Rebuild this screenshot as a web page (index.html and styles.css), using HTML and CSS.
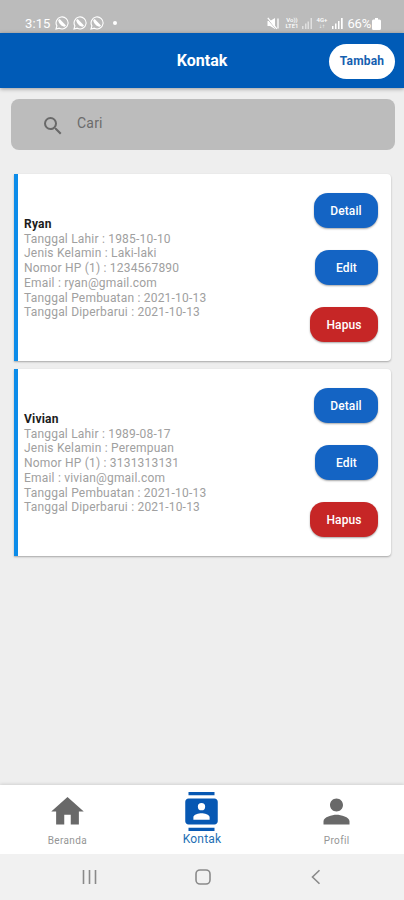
FILE: index.html
```
<!DOCTYPE html>
<html lang="id">
<head>
<meta charset="utf-8">
<title>Kontak</title>
<link rel="stylesheet" href="styles.css">
</head>
<body>
<svg class="defs" width="0" height="0">
  <symbol id="chat" viewBox="0 0 14 14">
    <path d="M1 13l.9-3.1A6 6 0 1 1 4.300 12.200z" fill="none" stroke="#fff" stroke-width="1.100"/>
    <path d="M3.200 4l1.500-1 6.300 6.500-1.400 1.200C6.500 10.500 3.600 7.500 3.200 4z" fill="#fff"/>
  </symbol>
</svg>
<div class="status">
  <span class="time">3:15</span>
  <svg class="chat"><use href="#chat"/></svg>
  <svg class="chat"><use href="#chat"/></svg>
  <svg class="chat"><use href="#chat"/></svg>
  <i class="dot"></i>
  <svg class="mute" width="13" height="13" viewBox="0 0 13 13"><path d="M.5 4h2.500L8 1v11L3 9H.5z" fill="#fff"/><path d="M0 1.500l9 10.500" stroke="#bbb" stroke-width="1"/><path d="M.8.8l9 11M11 1.500v10" stroke="#fff" stroke-width="1.300"/></svg>
  <span class="net volte">Vo))<br>LTE1</span>
  <svg class="bars faint" width="11" height="11" viewBox="0 0 11 11"><path d="M1 8h1.500v3H1zM4 5.500h1.500V11H4zM6.500 3.500H8V11H6.500zM9.500 0H11v11H9.500z" fill="#fff"/></svg>
  <span class="net lte">4G+<br>↓↑</span>
  <svg class="bars" width="11" height="11" viewBox="0 0 11 11"><path d="M0 8h1.500v3H0zM3 5.500h1.500V11H3zM6 3h1.500v8H6zM9 0h1.700v11H9z" fill="#fff"/></svg>
  <span class="percent">66%</span>
  <svg class="battery" width="9" height="12" viewBox="0 0 9 12"><path d="M3 0h3v1.500h1.500Q9 1.500 9 3v7.500Q9 12 7.500 12h-6Q0 12 0 10.500V3q0-1.500 1.500-1.500H3z" fill="#fff"/></svg>
</div>
<header class="header">
  <h1>Kontak</h1>
  <button class="add">Tambah</button>
</header>
<main class="main">
  <div class="search">
    <svg width="24" height="24" viewBox="0 0 24 24"><path fill="#696969" d="M15.500 14h-.79l-.28-.27A6.471 6.471 0 0 0 16 9.500 6.500 6.500 0 1 0 9.500 16c1.610 0 3.090-.59 4.230-1.570l.27.28v.79l5 4.990L20.490 19l-4.990-5zm-6 0C7.010 14 5 11.990 5 9.500S7.010 5 9.500 5 14 7.010 14 9.500 11.990 14 9.500 14z"/></svg>
    <span>Cari</span>
  </div>
  <section class="card">
    <div class="info">
      <h2>Ryan</h2>
      <p>Tanggal Lahir : 1985-10-10</p>
      <p>Jenis Kelamin : Laki-laki</p>
      <p>Nomor HP (1) : 1234567890</p>
      <p>Email : ryan@gmail.com</p>
      <p>Tanggal Pembuatan : 2021-10-13</p>
      <p>Tanggal Diperbarui : 2021-10-13</p>
    </div>
    <div class="actions">
      <button class="detail">Detail</button>
      <button class="edit">Edit</button>
      <button class="delete">Hapus</button>
    </div>
  </section>
  <section class="card">
    <div class="info">
      <h2>Vivian</h2>
      <p>Tanggal Lahir : 1989-08-17</p>
      <p>Jenis Kelamin : Perempuan</p>
      <p>Nomor HP (1) : 3131313131</p>
      <p>Email : vivian@gmail.com</p>
      <p>Tanggal Pembuatan : 2021-10-13</p>
      <p>Tanggal Diperbarui : 2021-10-13</p>
    </div>
    <div class="actions">
      <button class="detail">Detail</button>
      <button class="edit">Edit</button>
      <button class="delete">Hapus</button>
    </div>
  </section>
</main>
<nav class="tabs">
  <a class="tab"><svg viewBox="0 0 24 24"><path d="M10 20v-6h4v6h5v-8h3L12 3 2 12h3v8z"/></svg><span>Beranda</span></a>
  <a class="tab active"><svg viewBox="0 0 24 24"><path d="M20 0H4v2h16V0zM4 24h16v-2H4v2zM20 4H4c-1.100 0-2 .9-2 2v12c0 1.100.9 2 2 2h16c1.100 0 2-.9 2-2V6c0-1.100-.9-2-2-2zm-8 2.750a2.250 2.250 0 1 1 0 4.500 2.250 2.250 0 0 1 0-4.500zM17 17H7v-1.500c0-1.670 3.330-2.500 5-2.500s5 .83 5 2.500V17z"/></svg><span>Kontak</span></a>
  <a class="tab"><svg viewBox="0 0 24 24"><path d="M12 12c2.210 0 4-1.790 4-4s-1.790-4-4-4-4 1.790-4 4 1.790 4 4 4zm0 2c-2.670 0-8 1.340-8 4v2h16v-2c0-2.660-5.330-4-8-4z"/></svg><span>Profil</span></a>
</nav>
<footer class="system">
  <svg width="16" height="16" viewBox="0 0 16 16"><path d="M1.500 1v14M7.500 1v14M13.500 1v14"/></svg>
  <svg width="16" height="16" viewBox="0 0 16 16"><rect x="1" y="1" width="14" height="14" rx="4"/></svg>
  <svg width="16" height="16" viewBox="0 0 16 16"><path d="M11.500 1.200L4.500 8l7 6.800"/></svg>
</footer>
</body>
</html>
```

FILE: styles.css
```
* { box-sizing: border-box; }
body {
  margin: 0;
  width: 404px;
  height: 900px;
  display: flex;
  flex-direction: column;
  background: #eeeeee;
  font-family: Roboto, sans-serif;
  overflow: hidden;
}
h1, h2, p { margin: 0; }
button { border: 0; padding: 0; font-family: inherit; }
.defs { display: none; }

.status {
  flex: none;
  height: 33px;
  padding: 13px 23px 0 25px;
  display: flex;
  align-items: center;
  background: #bbbbbb;
  color: #fff;
}
.time { width: 30px; font-size: 13px; letter-spacing: 0.1px; }
.chat { width: 14px; height: 14px; margin-right: 3.500px; }
.dot { width: 4px; height: 4px; margin-left: 5px; border-radius: 50%; background: #fff; }
.mute { margin-left: auto; }
.net { font-size: 6px; line-height: 6px; font-weight: 500; text-align: center; }
.volte { width: 15px; margin-left: 4px; }
.lte { width: 13px; margin: 0 4px 0 3px; }
.faint { margin-left: 2px; opacity: 0.55; }
.percent { margin-left: 4px; font-size: 13px; letter-spacing: -0.2px; }
.battery { margin: 1px 0 0 1px; }

.header {
  flex: none;
  height: 55px;
  padding-right: 9px;
  display: grid;
  grid-template-columns: 75px 1fr 66px;
  align-items: center;
  background: #005bb7;
  box-shadow: 0 1px 4px rgba(0, 0, 0, 0.35);
}
.header h1 {
  grid-column: 2;
  padding-top: 1px;
  text-align: center;
  color: #fff;
  font-size: 16px;
  line-height: 20px;
  font-weight: 700;
}
.add {
  height: 35px;
  margin-top: 1px;
  border-radius: 18px;
  background: #fff;
  color: #1560b0;
  font-size: 12px;
  font-weight: 700;
  letter-spacing: 0.2px;
}

.main { flex: 1; padding: 10.500px 9px 0 10.500px; }
.search {
  height: 51.500px;
  margin-bottom: 24px;
  padding-left: 30.500px;
  display: flex;
  align-items: center;
  border-radius: 8px;
  background: #bcbcbc;
  color: #6b6b6b;
  font-size: 14px;
}
.search svg { margin: 4px 12px 0 0; }
.search span { margin-top: -2px; letter-spacing: 0.2px; }

.card {
  height: 187px;
  margin: 0 4px 8px 3.500px;
  padding: 0 13px 0 6px;
  display: flex;
  align-items: center;
  justify-content: space-between;
  border-left: 4.500px solid #0c8ce9;
  border-radius: 0 4px 4px 0;
  background: #fff;
  box-shadow: 0 1px 2px rgba(0, 0, 0, 0.3);
}
.info { padding-top: 2px; font-size: 12px; line-height: 14.750px; }
.info h2 { font-size: 12px; line-height: 14.750px; font-weight: 700; color: #1c1c1c; letter-spacing: 0.2px; }
.info p { color: #a0a0a0; letter-spacing: 0.2px; }
.actions { display: flex; flex-direction: column; align-items: flex-end; gap: 21.500px; }
.actions button {
  height: 35.500px;
  border-radius: 14px;
  background: #1464c4;
  color: #fff;
  font-size: 12px;
  font-weight: 500;
  letter-spacing: 0.1px;
  box-shadow: 0 1px 2px rgba(0, 0, 0, 0.35);
}
.actions .detail { width: 64px; }
.actions .edit { width: 63px; }
.actions .delete { width: 68px; background: #c62626; }

.tabs {
  flex: none;
  height: 69px;
  display: grid;
  grid-template-columns: repeat(3, 1fr);
  background: #fff;
  box-shadow: 0 -1px 3px rgba(0, 0, 0, 0.12);
}
.tab {
  padding-top: 7px;
  display: flex;
  flex-direction: column;
  align-items: center;
  color: #959595;
  font-size: 10px;
  line-height: 14px;
  letter-spacing: 0.35px;
}
.tab svg { width: 39px; height: 39px; fill: #696969; }
.tab span { margin-top: 3px; }
.tab.active { color: #2470b4; font-size: 12px; letter-spacing: 0.2px; }
.tab.active svg { fill: #0758b3; }
.tab.active span { margin-top: 1px; }

.system {
  flex: none;
  height: 46px;
  padding: 0 80px 0 82px;
  display: flex;
  align-items: center;
  justify-content: space-between;
  background: #f1f1f1;
}
.system svg { margin-top: -1px; fill: none; stroke: #8a8a8a; stroke-width: 1.600; }
```
